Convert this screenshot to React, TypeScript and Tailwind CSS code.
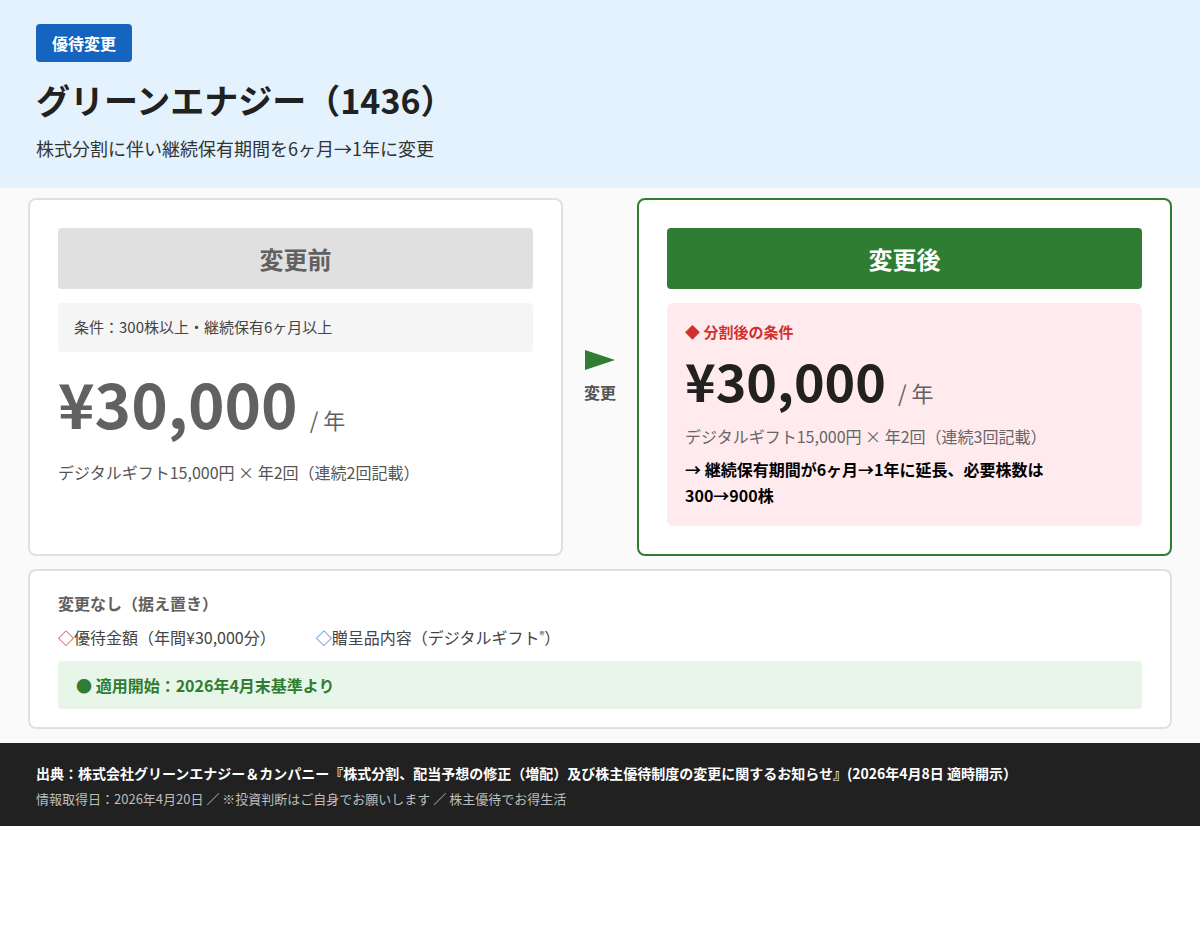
export default function App() {
  return (
    <div className="w-full bg-white" style={{ fontFamily: '"Noto Sans CJK JP", "Noto Sans", sans-serif' }}>
      <div className="bg-[#e3f2fd] px-9 pt-6 pb-[26px]">
        <span className="inline-block rounded bg-[#1565c0] px-4 py-[5px] text-base font-bold leading-[28px] text-white">優待変更</span>
        <h1 className="mt-[14px] text-[34px] font-bold leading-[48px] text-[#212121]">グリーンエナジー（1436）</h1>
        <p className="mt-[10px] text-lg leading-[28px] text-[#333]">株式分割に伴い継続保有期間を6ヶ月→1年に変更</p>
      </div>
      <div className="bg-[#fafafa] px-7 pt-[10px] pb-[14px]">
        <div className="flex items-stretch">
          <div className="flex-1 rounded-lg border-2 border-[#e0e0e0] bg-white px-7 pt-7 pb-10">
            <div className="flex h-[61px] items-center justify-center rounded bg-[#e0e0e0] text-2xl font-bold text-[#616161]">変更前</div>
            <div className="mt-[14px] rounded bg-[#f5f5f5] px-4 py-[13px] text-[15px] text-[#444]">条件：300株以上・継続保有6ヶ月以上</div>
            <div className="mt-[10px] flex items-baseline">
              <span className="text-[62px] font-bold leading-[80px] text-[#616161]">¥30,000</span>
              <span className="ml-3 text-[22px] text-[#616161]">/ 年</span>
            </div>
            <p className="mt-[18px] text-base text-[#555]">デジタルギフト15,000円 × 年2回（連続2回記載）</p>
          </div>
          <div className="flex w-[74px] flex-col items-center justify-center">
            <svg width="30" height="20" viewBox="0 0 30 20"><polygon points="0,0 30,10 0,20" fill="#2e7d32" /></svg>
            <span className="mt-[10px] text-base font-bold text-[#555]">変更</span>
          </div>
          <div className="flex-1 rounded-lg border-2 border-[#2e7d32] bg-white px-7 pt-7 pb-7">
            <div className="flex h-[61px] items-center justify-center rounded bg-[#2e7d32] text-2xl font-bold text-white">変更後</div>
            <div className="mt-[14px] rounded-md bg-[#ffebee] px-[18px] pt-[18px] pb-[18px]">
              <p className="text-[15px] font-bold text-[#d32f2f]">◆ 分割後の条件</p>
              <div className="mt-1 flex items-baseline">
                <span className="text-[52px] font-bold leading-[64px] text-[#212121]">¥30,000</span>
                <span className="ml-3 text-[22px] text-[#616161]">/ 年</span>
              </div>
              <p className="mt-3 text-base text-[#666]">デジタルギフト15,000円 × 年2回（連続3回記載）</p>
              <p className="mt-2 text-base font-bold leading-[26px] text-black">→ 継続保有期間が6ヶ月→1年に延長、必要株数は<br />300→900株</p>
            </div>
          </div>
        </div>
        <div className="mt-[13px] rounded-lg border-2 border-[#e0e0e0] bg-white px-7 pt-5 pb-[18px]">
          <p className="text-base font-bold text-[#616161]">変更なし（据え置き）</p>
          <div className="mt-[10px] flex gap-10 text-base text-[#444]">
            <span><span className="text-[#c2185b]">◇</span>優待金額（年間¥30,000分）</span>
            <span><span className="text-[#1976d2]">◇</span>贈呈品内容（デジタルギフト<sup className="text-[10px]">®</sup>）</span>
          </div>
          <div className="mt-[12px] rounded bg-[#e8f5e9] px-[18px] py-[12px] text-base font-bold text-[#2e7d32]">● 適用開始：2026年4月末基準より</div>
        </div>
      </div>
      <div className="bg-[#212121] px-9 pt-[20px] pb-[18px]">
        <p className="text-sm font-bold text-white">出典：株式会社グリーンエナジー＆カンパニー『株式分割、配当予想の修正（増配）及び株主優待制度の変更に関するお知らせ』(2026年4月8日 適時開示）</p>
        <p className="mt-[6px] text-[13px] text-[#bdbdbd]">情報取得日：2026年4月20日 ／ ※投資判断はご自身でお願いします ／ 株主優待でお得生活</p>
      </div>
    </div>
  );
}
